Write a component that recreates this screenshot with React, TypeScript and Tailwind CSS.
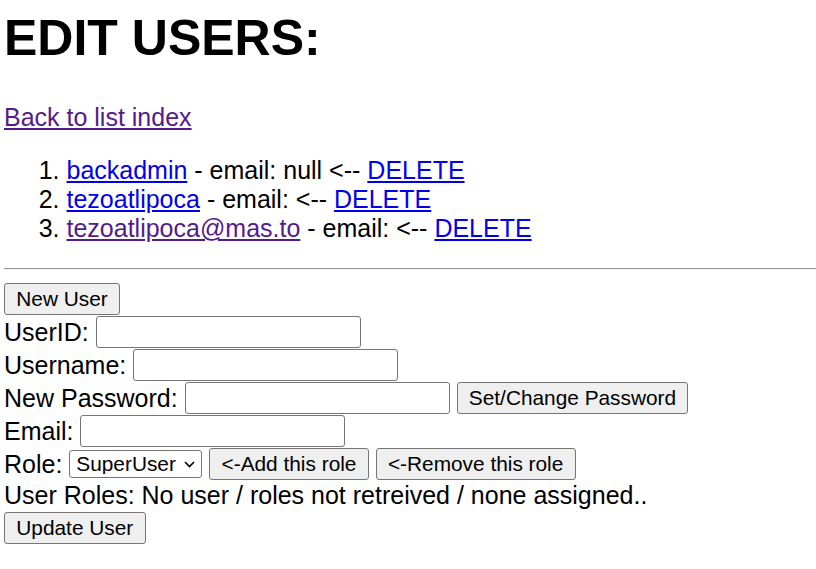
import React from "react";

const btn =
  "h-[32px] px-[11.3px] border border-[#767676] bg-[#efefef] rounded-[3px] text-[20.83px] leading-none text-black whitespace-nowrap shrink-0";
const inp =
  "w-[265px] h-[31.5px] border border-[#767676] bg-white rounded-[3px] shrink-0";
const row = "flex items-center gap-[6.95px] h-[33px]";

export default function App() {
  const users = [
    { name: "backadmin", email: "null ", visited: false },
    { name: "tezoatlipoca", email: "", visited: false },
    { name: "tezoatlipoca@mas.to", email: "", visited: true },
  ];
  return (
    <div
      className="bg-white text-black pt-[10px] pl-[4px] min-h-[569px]"
      style={{ fontFamily: '"Liberation Sans", Arial, sans-serif' }}
    >
      <h1 className="text-[50px] leading-[57.5px] font-bold m-0">EDIT USERS:</h1>
      <p className="mt-[35.2px] text-[25px] leading-[28.75px]">
        <a href="#" className="text-[#551a8b] underline">
          Back to list index
        </a>
      </p>
      <ol className="mt-[25px] pl-[62.5px] list-decimal text-[25px] leading-[29px]">
        {users.map((u) => (
          <li key={u.name}>
            <a
              href="#"
              className={u.visited ? "text-[#551a8b] underline" : "text-[#0000ee] underline"}
            >
              {u.name}
            </a>
            {" - email: " + u.email + "<-- "}
            <a href="#" className="text-[#0000ee] underline">
              DELETE
            </a>
          </li>
        ))}
      </ol>
      <div className="mt-[24.5px] h-[2px] border-t border-t-[#9a9a9a] border-b border-b-[#eeeeee]" />
      <div className="mt-[12.5px] text-[25px] leading-[28.75px]">
        <div className={row}>
          <button className={btn}>New User</button>
        </div>
        <div className={row}>
          <span>UserID:</span>
          <input className={inp} />
        </div>
        <div className={row}>
          <span>Username:</span>
          <input className={inp} />
        </div>
        <div className={row}>
          <span>New Password:</span>
          <input className={inp} />
          <button className={btn}>Set/Change Password</button>
        </div>
        <div className={row}>
          <span>Email:</span>
          <input className={inp} />
        </div>
        <div className={row}>
          <span>Role:</span>
          <span className="relative inline-flex shrink-0">
            <select className="appearance-none w-[133px] h-[27.5px] border border-[#767676] rounded-[3px] bg-white pl-[6px] text-[20.83px] leading-none text-black">
              <option>SuperUser</option>
            </select>
            <svg
              className="absolute right-[7px] top-[10.5px] pointer-events-none"
              width="11"
              height="7"
              viewBox="0 0 11 7"
            >
              <path d="M1 1 L5.5 5.5 L10 1" fill="none" stroke="#000" strokeWidth="1.6" />
            </svg>
          </span>
          <button className={btn}>&lt;-Add this role</button>
          <button className={btn}>&lt;-Remove this role</button>
        </div>
        <div className="h-[31px] pt-[1px]">
          User Roles: No user / roles not retreived / none assigned..
        </div>
        <div className={row}>
          <button className={btn}>Update User</button>
        </div>
      </div>
    </div>
  );
}
